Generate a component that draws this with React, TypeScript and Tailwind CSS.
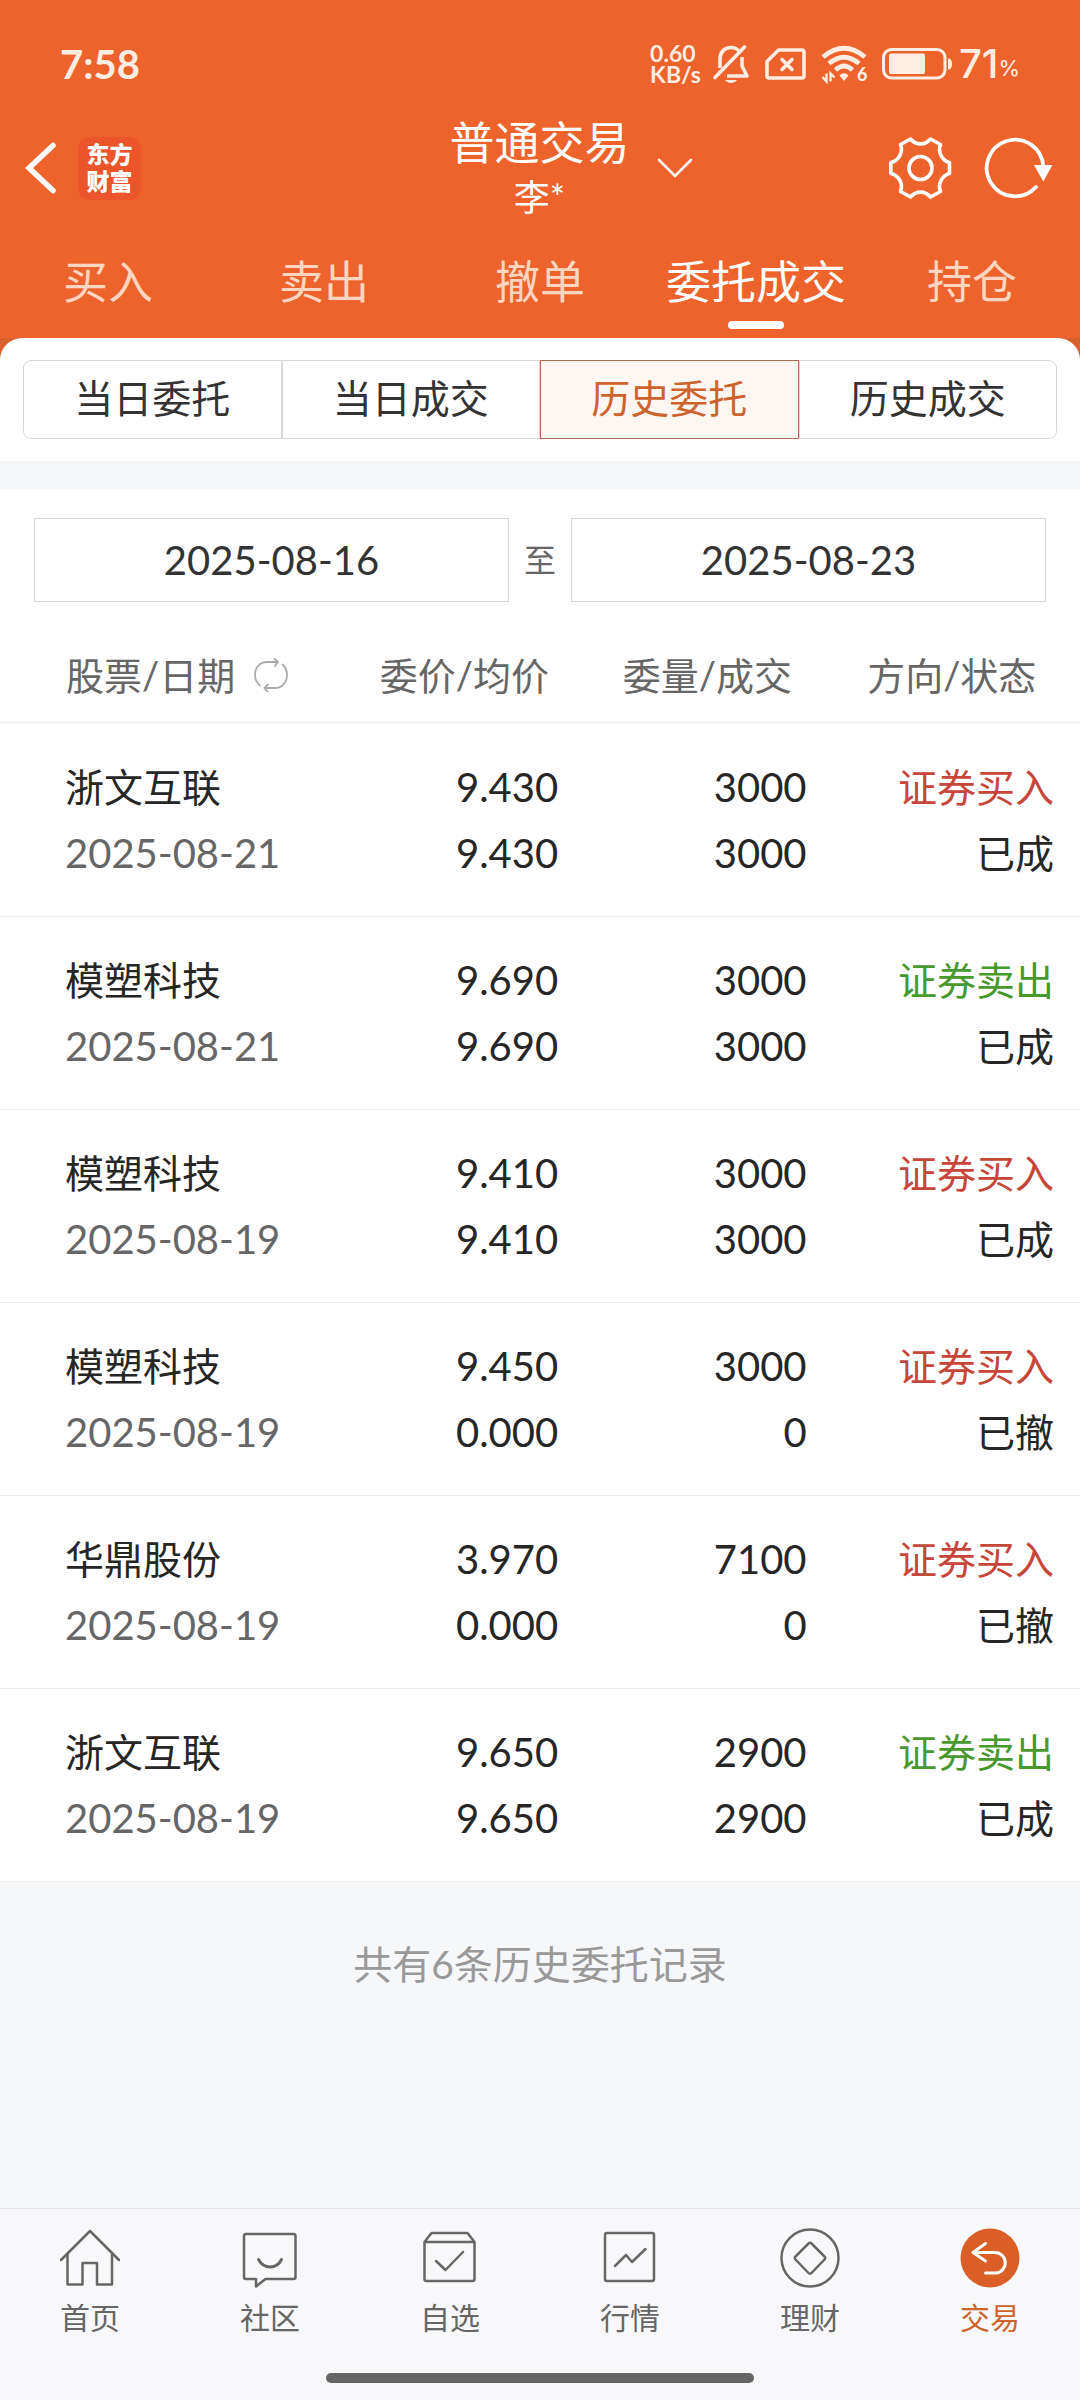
import { useState } from "react";

const tabs = ["买入", "卖出", "撤单", "委托成交", "持仓"];
const segments = ["当日委托", "当日成交", "历史委托", "历史成交"];

type Order = {
  name: string;
  date: string;
  price: string;
  avg: string;
  qty: string;
  filled: string;
  side: "buy" | "sell";
  status: string;
};

const orders: Order[] = [
  { name: "浙文互联", date: "2025-08-21", price: "9.430", avg: "9.430", qty: "3000", filled: "3000", side: "buy", status: "已成" },
  { name: "模塑科技", date: "2025-08-21", price: "9.690", avg: "9.690", qty: "3000", filled: "3000", side: "sell", status: "已成" },
  { name: "模塑科技", date: "2025-08-19", price: "9.410", avg: "9.410", qty: "3000", filled: "3000", side: "buy", status: "已成" },
  { name: "模塑科技", date: "2025-08-19", price: "9.450", avg: "0.000", qty: "3000", filled: "0", side: "buy", status: "已撤" },
  { name: "华鼎股份", date: "2025-08-19", price: "3.970", avg: "0.000", qty: "7100", filled: "0", side: "buy", status: "已撤" },
  { name: "浙文互联", date: "2025-08-19", price: "9.650", avg: "9.650", qty: "2900", filled: "2900", side: "sell", status: "已成" },
];

function StatusBar() {
  return (
    <div className="flex h-28 items-center justify-between pt-4 pr-[60px] pl-[60px] text-[#ffece2]">
      <span className="text-[40px] leading-[48px] font-bold">7:58</span>
      <div className="flex items-center">
        <span className="mr-3 flex flex-col text-[23px] leading-[21px] font-bold">
          <span>0.60</span>
          <span>KB/s</span>
        </span>
        <svg className="mr-4 h-10 w-9" viewBox="0 0 36 40" fill="none" stroke="currentColor" strokeWidth="3.6" aria-hidden="true">
          <path d="M7 24V15C7 8 11.5 3.5 18 3.5c3.5 0 6.500 1.500 8.500 4" />
          <path d="M29 13v9l5 10H14" strokeLinejoin="round" />
          <path d="M2 33.500 31.500 3" strokeLinecap="round" />
          <path d="M12 36h12c-1.500 2-3.500 3-6 3s-4.500-1-6-3z" fill="currentColor" stroke="none" />
        </svg>
        <svg className="mr-[15px] h-8 w-[41px]" viewBox="0 0 41 32" fill="none" stroke="currentColor" strokeWidth="3.600" strokeLinejoin="round" aria-hidden="true">
          <path d="M13.500 2H37a2 2 0 0 1 2 2v24a2 2 0 0 1-2 2H4a2 2 0 0 1-2-2V13.500z" />
          <path d="m17 11.500 10 10m0-10-10 10" strokeLinecap="round" />
        </svg>
        <div className="mr-[13px] flex h-10 items-end">
          <svg className="-mr-3 h-10 w-12" viewBox="0 0 48 40" fill="none" stroke="currentColor" strokeWidth="4.600" aria-hidden="true">
            <path d="M2 13Q23-4.500 44 13" />
            <path d="M8 19.500Q23 7 38 19.500" />
            <path d="M14.500 26Q23 18 31.500 26" />
            <path d="M18.500 31.500Q23 27 27.500 31.500L23 37z" fill="currentColor" stroke="none" />
            <path d="M5.500 29.500v8L1.500 33M9.500 37.500v-8l4 4" strokeWidth="2.400" />
          </svg>
          <span className="w-3 text-[18px] leading-5 font-black">6</span>
        </div>
        <svg className="mr-[6px] h-8 w-[71px]" viewBox="0 0 71 32" fill="none" aria-hidden="true">
          <rect x="1.500" y="1.500" width="61.500" height="28.500" rx="8" stroke="currentColor" strokeWidth="3" />
          <rect x="7" y="5.500" width="36" height="20.500" rx="2" fill="currentColor" />
          <path d="M66 10.500c3 0 4 2 4 5.500s-1 5.500-4 5.500z" fill="currentColor" />
        </svg>
        <span className="font-['Inter',sans-serif] text-[40px] leading-[48px] font-medium">71</span>
        <span className="pt-2 font-['Inter',sans-serif] text-[22px] leading-[40px]">%</span>
      </div>
    </div>
  );
}

function TitleBar() {
  return (
    <div className="grid grid-cols-[1fr_auto_1fr] items-center pr-[25px] pl-6">
      <div className="flex items-center">
        <button type="button" aria-label="返回">
          <svg className="h-14 w-[34px]" viewBox="0 0 34 56" fill="none" stroke="currentColor" strokeWidth="5.500" strokeLinecap="round" aria-hidden="true">
            <path d="M29 5.500 5 28l24 22.500" />
          </svg>
        </button>
        <span className="ml-5 flex h-[63px] w-[63px] flex-col items-center justify-center rounded-xl bg-[#ec5429] text-[23px] leading-[27px] font-black">
          <span>东方</span>
          <span>财富</span>
        </span>
      </div>
      <button type="button" className="flex flex-col items-center pt-1">
        <span className="text-[45px] leading-[54px]">普通交易</span>
        <span className="text-[36px] leading-[54px]">李*</span>
      </button>
      <div className="flex items-center justify-between pl-[27px]">
        <button type="button" aria-label="切换账户">
          <svg className="h-5 w-9" viewBox="0 0 36 20" fill="none" stroke="currentColor" strokeWidth="2.600" strokeLinecap="round" aria-hidden="true">
            <path d="m2 2 16 16L34 2" />
          </svg>
        </button>
        <div className="flex gap-[31px]">
          <button type="button" aria-label="设置">
            <svg className="h-16 w-16" viewBox="0 0 64 64" fill="none" stroke="currentColor" strokeWidth="3.600" strokeLinejoin="round" aria-hidden="true">
              <path d="M22.500 3C28 9.500 37 9.500 42.500 3L52.500 8.500C49.500 16 54 24.500 61.500 26.500V37.500C54 39.500 49.500 48 52.500 55.500L42.500 61C37 54.500 28 54.500 22.500 61L12.500 55.500C15.500 48 11 39.500 2.800 37.500V26.500C11 24.500 15.500 16 12.500 8.500Z" />
              <circle cx="32.500" cy="32" r="11.500" />
            </svg>
          </button>
          <button type="button" aria-label="刷新">
            <svg className="h-16 w-[72px]" viewBox="0 0 72 64" fill="none" stroke="currentColor" strokeWidth="3.800" aria-hidden="true">
              <path d="M60.300 31A28.300 28.300 0 1 0 53 51" strokeLinecap="round" />
              <path d="M51 29h18.500L60.300 45.500z" fill="currentColor" stroke="none" />
            </svg>
          </button>
        </div>
      </div>
    </div>
  );
}

const navItems = [
  {
    label: "首页",
    icon: (
      <>
        <path d="M1 32 30 3l29 29" />
        <path d="M7.500 26v30.500h15V35H37v21.500h15V26" />
      </>
    ),
  },
  {
    label: "社区",
    icon: (
      <>
        <path d="M6 6h47.500a2 2 0 0 1 2 2v41a2 2 0 0 1-2 2H25.500l-9.500 7.500V51H6a2 2 0 0 1-2-2V8a2 2 0 0 1 2-2z" />
        <path d="M18.500 31.500c5.500 10 18 10 23 0" strokeWidth="3" />
      </>
    ),
  },
  {
    label: "自选",
    icon: (
      <>
        <path d="M4.500 14 11.500 5h36l7 9v37a2 2 0 0 1-2 2h-46a2 2 0 0 1-2-2zM4.500 14h50" />
        <path d="m16 33 9.500 9L43 24" />
      </>
    ),
  },
  {
    label: "行情",
    icon: (
      <>
        <rect x="5" y="5" width="49" height="48" rx="2" />
        <path d="m15 38 11-11 6 7 13.500-13" />
      </>
    ),
  },
  {
    label: "理财",
    icon: (
      <>
        <circle cx="30" cy="30" r="28.500" />
        <path d="m31.500 15.500 13 13a2 2 0 0 1 0 3l-13 13.500a2 2 0 0 1-3 0l-13-13.500a2 2 0 0 1 0-3l13-13a2 2 0 0 1 3 0z" />
      </>
    ),
  },
  {
    label: "交易",
    icon: (
      <>
        <circle cx="30" cy="30" r="29.500" fill="#d95f27" stroke="none" />
        <path d="M25.500 15.500 13 24.500l12.500 8.500M13 24.500h22a10.300 10.300 0 0 1 0 20.600h-9.500" stroke="#fff" strokeWidth="3" />
      </>
    ),
  },
];

export default function App() {
  const [tab, setTab] = useState("委托成交");
  const [segment, setSegment] = useState("历史委托");

  return (
    <div className="flex min-h-screen flex-col bg-[#f6f7f9] font-['Lato','Noto_Sans_CJK_SC',sans-serif] text-[#262626]">
      <header className="bg-[#ed632b] text-white">
        <StatusBar />
        <TitleBar />
        <nav className="flex pt-7">
          {tabs.map((t) => (
            <button
              key={t}
              type="button"
              onClick={() => setTab(t)}
              className={`flex flex-1 flex-col items-center gap-[9px] pb-[9px] text-[45px] leading-[60px] whitespace-nowrap ${t === tab ? "text-white" : "text-[#fdd5c0]"}`}
            >
              {t}
              <span className={`h-2 w-14 rounded-full ${t === tab ? "bg-white" : ""}`} />
            </button>
          ))}
        </nav>
      </header>

      <main className="flex-1">
        <div className="bg-[#d9602b]">
          <div className="flex rounded-t-[22px] bg-white px-[23px] py-[22px]">
            {segments.map((s) => (
              <button
                key={s}
                type="button"
                onClick={() => setSegment(s)}
                className={`h-[79px] flex-1 border pb-[3px] text-[39px] leading-[60px] first:rounded-l-lg last:rounded-r-lg ${
                  s === segment ? "border-[#b0694c] bg-[#fdf6f1] text-[#cf632e]" : "border-[#d8d8da] text-[#333]"
                }`}
              >
                {s}
              </button>
            ))}
          </div>
        </div>

        <div className="mt-[29px] flex items-center justify-between bg-white px-[34px] pt-7">
          <input
            aria-label="开始日期"
            defaultValue="2025-08-16"
            className="h-[84px] w-0 flex-1 border border-[#d6d6d6] text-center text-[40px] text-[#333]"
          />
          <span className="w-[62px] text-center text-[32px] leading-[48px] text-[#666]">至</span>
          <input
            aria-label="结束日期"
            defaultValue="2025-08-23"
            className="h-[84px] w-0 flex-1 border border-[#d6d6d6] text-center text-[40px] text-[#333]"
          />
        </div>

        <table className="w-full table-fixed bg-white">
          <colgroup>
            <col className="w-[32%]" />
            <col className="w-[22%]" />
            <col className="w-[23%]" />
            <col className="w-[23%]" />
          </colgroup>
          <thead>
            <tr className="h-[120px] border-b-3 border-[#f7f7f8] text-[38px] leading-[60px] whitespace-nowrap text-[#666]">
              <th className="pt-7 pl-[66px] text-left font-normal">
                <span className="flex items-center gap-[19px]">
                  股票/日期
                  <button type="button" aria-label="切换排序">
                    <svg className="h-[34px] w-[34px]" viewBox="0 0 34 34" fill="none" stroke="#aaa" strokeWidth="1.800" strokeLinecap="round" aria-hidden="true">
                      <path d="M6 27.500C2.500 24.500 1 21 1 17 1 9 6 4 13 4h11M20.500 1 24 4l-3 4" />
                      <path d="M28.500 6.500C31.500 9 33 12.500 33 17c0 7.500-5 13-12 13H10.500M14 26.500 10.500 30l3 3.500" />
                    </svg>
                  </button>
                </span>
              </th>
              <th className="pt-7 font-normal">委价/均价</th>
              <th className="pt-7 font-normal">委量/成交</th>
              <th className="pt-7 pr-2 font-normal">方向/状态</th>
            </tr>
          </thead>
          <tbody className="text-[40px] leading-[66px]">
            {orders.map((o, i) => (
              <tr key={i} className="border-b border-[#ebebeb]">
                <td className="py-[30px] pl-[65px]">
                  <div className="text-[39px]">{o.name}</div>
                  <div className="text-[#666]">{o.date}</div>
                </td>
                <td className="py-[30px] pr-[25px] text-right">
                  <div>{o.price}</div>
                  <div>{o.avg}</div>
                </td>
                <td className="py-[30px] pr-[25px] text-right">
                  <div>{o.qty}</div>
                  <div>{o.filled}</div>
                </td>
                <td className="py-[30px] pr-[26px] text-right text-[39px]">
                  <div className={o.side === "buy" ? "text-[#c8453a]" : "text-[#47982d]"}>
                    {o.side === "buy" ? "证券买入" : "证券卖出"}
                  </div>
                  <div>{o.status}</div>
                </td>
              </tr>
            ))}
          </tbody>
        </table>

        <p className="pt-[52px] text-center text-[39px] leading-[60px] text-[#999]">共有6条历史委托记录</p>
      </main>

      <footer className="border-t border-[#e3e3e5] bg-[#f8f8fa] pt-[19px] pb-[17px]">
        <nav className="flex">
          {navItems.map((n) => (
            <a
              key={n.label}
              href="#"
              className={`flex flex-1 flex-col items-center gap-[11px] text-[30px] leading-9 ${n.label === "交易" ? "text-[#cf632e]" : "text-[#666]"}`}
            >
              <svg className="h-[60px] w-[60px]" viewBox="0 0 60 60" fill="none" stroke="currentColor" strokeWidth="2.500" strokeLinejoin="round" strokeLinecap="round" aria-hidden="true">
                {n.icon}
              </svg>
              {n.label}
            </a>
          ))}
        </nav>
        <div className="mx-auto mt-[38px] h-[10px] w-[428px] max-w-full rounded-full bg-[#666]" />
      </footer>
    </div>
  );
}
